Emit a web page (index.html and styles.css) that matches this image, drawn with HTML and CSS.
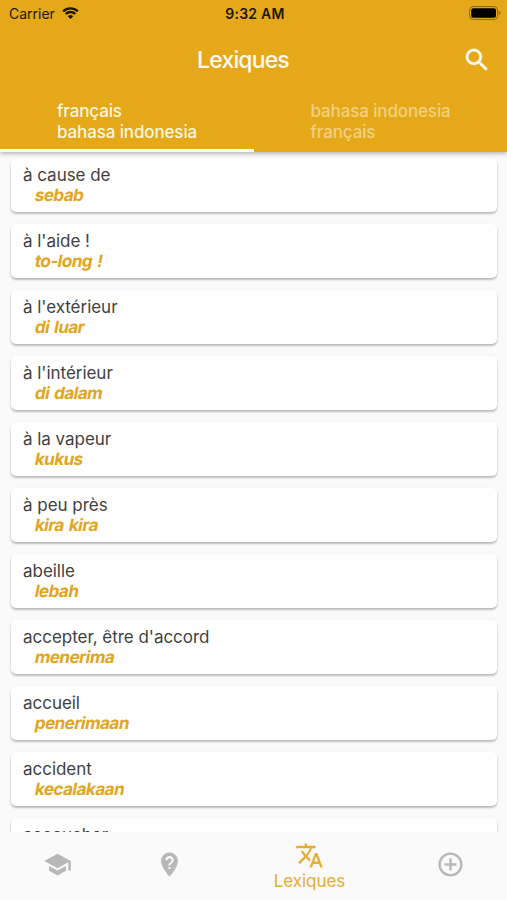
FILE: index.html
```
<!DOCTYPE html>
<html lang="fr">
<head>
<meta charset="utf-8">
<title>Lexiques</title>
<link rel="stylesheet" href="styles.css">
</head>
<body>
<div class="app">
  <header class="header">
    <div class="status">
      <div class="carrier"><span class="carrier-name">Carrier</span>
        <svg class="wifi" viewBox="0 0 17 12"><path d="M1.2 4.4a10.4 10.4 0 0 1 14.6 0" /><path d="M3.7 7a6.8 6.8 0 0 1 9.6 0" /><path class="dot" d="M5.8 9.2a3.9 3.9 0 0 1 5.4 0L8.5 12z" /></svg>
      </div>
      <div class="time">9:32 AM</div>
      <svg class="battery" viewBox="0 0 32 14"><rect class="shell" x=".6" y=".6" width="28" height="12.8" rx="3.4"/><rect x="2.2" y="2.2" width="24.8" height="9.6" rx="2"/><path class="tip" d="M29.8 4.8q1.7.6 1.7 2.2t-1.7 2.2z"/></svg>
    </div>
    <div class="toolbar">
      <h1 class="title">Lexiques</h1>
      <svg class="search" viewBox="0 0 24 24"><path d="M15.5 14h-.79l-.28-.27A6.47 6.47 0 0 0 16 9.5 6.5 6.5 0 1 0 9.5 16c1.61 0 3.09-.59 4.23-1.57l.27.28v.79l5 4.99L20.49 19l-4.99-5zm-6 0a4.5 4.5 0 1 1 0-9 4.5 4.5 0 0 1 0 9z"/></svg>
    </div>
    <div class="tabs">
      <div class="tab active"><div>français</div><div>bahasa indonesia</div></div>
      <div class="tab"><div>bahasa indonesia</div><div>français</div></div>
    </div>
  </header>
  <main class="list">
    <article class="card"><div class="word">à cause de</div><div class="translation">sebab</div></article>
    <article class="card"><div class="word">à l'aide !</div><div class="translation">to-long !</div></article>
    <article class="card"><div class="word">à l'extérieur</div><div class="translation">di luar</div></article>
    <article class="card"><div class="word">à l'intérieur</div><div class="translation">di dalam</div></article>
    <article class="card"><div class="word">à la vapeur</div><div class="translation">kukus</div></article>
    <article class="card"><div class="word">à peu près</div><div class="translation">kira kira</div></article>
    <article class="card"><div class="word">abeille</div><div class="translation">lebah</div></article>
    <article class="card"><div class="word">accepter, être d'accord</div><div class="translation">menerima</div></article>
    <article class="card"><div class="word">accueil</div><div class="translation">penerimaan</div></article>
    <article class="card"><div class="word">accident</div><div class="translation">kecalakaan</div></article>
    <article class="card"><div class="word">accoucher</div></article>
  </main>
  <nav class="nav">
    <div class="item"><svg viewBox="0 0 24 24"><path d="M5 13.18v4L12 21l7-3.82v-4L12 17l-7-3.82zM12 3 1 9l11 6 9-4.91V17h2V9L12 3z"/></svg></div>
    <div class="item"><svg viewBox="0 0 24 24"><path fill-rule="evenodd" d="M12 2a7 7 0 0 0-7 7c0 5.25 7 13 7 13s7-7.75 7-13a7 7 0 0 0-7-7zm.88 13.75h-1.75V14h1.75v1.75zm0-2.87h-1.75c0-2.84 2.62-2.62 2.62-4.38a1.75 1.75 0 0 0-3.5 0H8.5a3.5 3.5 0 0 1 7 0c0 2.19-2.62 2.41-2.62 4.38z"/></svg></div>
    <div class="item current"><svg viewBox="0 0 24 24"><path d="m12.87 15.07-2.54-2.51.03-.03A17.52 17.52 0 0 0 14.07 6H17V4h-7V2H8v2H1v1.99h11.17C11.5 7.92 10.44 9.75 9 11.35 8.07 10.32 7.3 9.19 6.69 8h-2c.73 1.63 1.73 3.17 2.98 4.56l-5.09 5.02L4 19l5-5 3.11 3.11.76-2.04zM18.5 10h-2L12 22h2l1.12-3h4.75L21 22h2l-4.5-12zm-2.62 7 1.62-4.33L19.12 17h-3.24z"/></svg><span class="label">Lexiques</span></div>
    <div class="item"><svg viewBox="0 0 24 24"><path d="M13 7h-2v4H7v2h4v4h2v-4h4v-2h-4V7zm-1-5a10 10 0 1 0 0 20 10 10 0 0 0 0-20zm0 18a8 8 0 1 1 0-16 8 8 0 0 1 0 16z"/></svg></div>
  </nav>
</div>
</body>
</html>
```
FILE: styles.css
```
* { box-sizing: border-box; }
body { margin: 0; font-family: Inter, "Liberation Sans", sans-serif; }
.app { height: 900px; display: flex; flex-direction: column; overflow: hidden; background: #fafafa; }
.header { position: relative; z-index: 1; height: 152px; flex: none; display: flex; flex-direction: column; background: #e5a819; box-shadow: 0 1px 5px rgba(0,0,0,.35); }
.status { height: 27px; display: grid; grid-template-columns: 1fr auto 1fr; align-items: center; padding: 0 6px 0 9px; font-size: 14px; color: #1d1604; }
.carrier { display: flex; align-items: center; gap: 7px; }
.carrier-name { font-size: 14px; }
.wifi { width: 17px; height: 12px; margin-top: -2px; fill: none; stroke: #1d1604; stroke-width: 2.3; }
.wifi .dot { fill: #1d1604; stroke: none; }
.time { font-weight: 600; letter-spacing: .25px; color: #1d1604; }
.battery { width: 32px; height: 14px; margin-top: -1px; justify-self: end; fill: #000; }
.battery .shell { fill: none; stroke: #8b6713; stroke-width: 1; }
.battery .tip { fill: #8b6713; }
.toolbar { height: 66px; display: grid; grid-template-columns: 1fr auto 1fr; align-items: center; padding: 0 15px 0 0; }
.title { grid-column: 2; margin: 0; padding-right: 2px; font-size: 23px; line-height: 28px; font-weight: 500; letter-spacing: -.85px; color: #fffaf0; transform: translateX(-2px); }
.search { width: 30px; height: 30px; margin-top: -1px; justify-self: end; fill: #fffaf0; stroke: #fffaf0; stroke-width: .3; }
.tabs { flex: 1; display: grid; grid-template-columns: 1fr 1fr; }
.tab { padding: 8px 0 0 57px; font-size: 17px; line-height: 21px; font-weight: 500; letter-spacing: -.13px; color: #f2d180; border-bottom: 3px solid transparent; }
.active { color: #fff6df; border-bottom-color: #fffdf7; }
.list { flex: 1; min-height: 0; overflow: hidden; display: flex; flex-direction: column; gap: 12px; padding: 6px 10px 0 11px; }
.card { flex: none; height: 54px; padding: 7px 12px 5px; border-radius: 5px; background: #fff; box-shadow: 0 2px 2px rgba(0,0,0,.2), 0 1px 3px rgba(0,0,0,.1); color: #3f3f3f; font-size: 17px; line-height: 21px; }
.word { letter-spacing: -.03px; }
.translation { width: max-content; margin: -1px 0 0 12px; font-weight: 700; color: #e2a51e; letter-spacing: -.5px; word-spacing: 1.5px; transform: skewX(-11deg); }
.nav { height: 68px; flex: none; display: grid; grid-template-columns: 114px 111px 169px 113px; background: #fafafa; }
.item { display: flex; flex-direction: column; align-items: center; justify-content: center; padding-bottom: 4px; color: #b8b8b8; }
.item svg { width: 29px; height: 29px; fill: currentColor; }
.current { color: #e6ad32; justify-content: flex-start; padding-top: 9px; }
.label { margin-top: 1px; font-size: 17px; line-height: 21px; letter-spacing: -.05px; }
```
